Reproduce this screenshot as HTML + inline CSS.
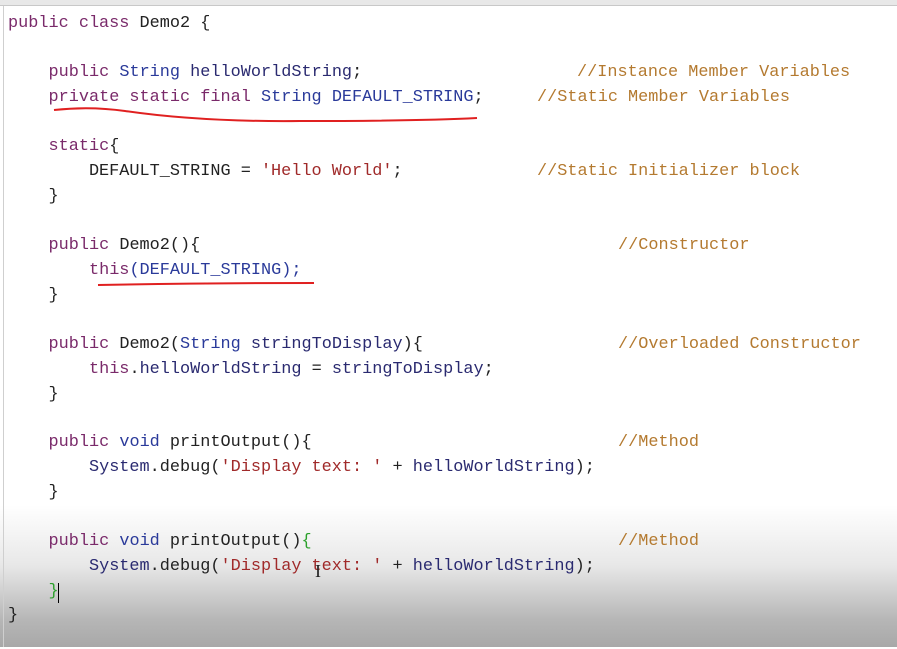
<!DOCTYPE html>
<html><head><style>
html,body{margin:0;padding:0}
body{width:897px;height:647px;overflow:hidden;position:relative;background:linear-gradient(to bottom,#fff 0px,#fff 505px,#e8e8e8 565px,#b6b6b6 620px,#a8a8a8 647px);font-family:"Liberation Mono",monospace;font-size:16.86px;color:#222}
.top{position:absolute;left:0;top:0;width:897px;height:5px;background:#e8e8e8;border-bottom:1px solid #c8c8c8}
.lb{position:absolute;left:3px;top:6px;width:1px;height:641px;background:#cfcfcf}
.w{position:absolute;left:0;top:2px;width:897px;height:647px}
.l{position:absolute;left:8px;white-space:pre;line-height:24.7px;height:24.7px}
.c{position:absolute;white-space:pre;line-height:24.7px;color:#b47a30}
.k{color:#7a2a6a}.t{color:#2a3a9a}.i{color:#2a2a70}.s{color:#a02a2a}.g{color:#2aa02a}
</style></head><body>
<div class="top"></div><div class="lb"></div>
<div class="w">
<div class="l" style="top:9.6px"><span class="k">public class</span> Demo2 {</div>
<div class="l" style="top:59px">    <span class="k">public</span> <span class="t">String</span> <span class="i">helloWorldString</span>;</div>
<div class="c" style="left:577px;top:59px">//Instance Member Variables</div>
<div class="l" style="top:84px">    <span class="k">private static final</span> <span class="t">String</span> <span class="t">DEFAULT_STRING</span>;</div>
<div class="c" style="left:537px;top:84px">//Static Member Variables</div>
<div class="l" style="top:133px">    <span class="k">static</span>{</div>
<div class="l" style="top:158px">        DEFAULT_STRING = <span class="s">'Hello World'</span>;</div>
<div class="c" style="left:537px;top:158px">//Static Initializer block</div>
<div class="l" style="top:183px">    }</div>
<div class="l" style="top:232px">    <span class="k">public</span> Demo2(){</div>
<div class="c" style="left:618px;top:232px">//Constructor</div>
<div class="l" style="top:257px">        <span class="k">this</span><span class="t">(DEFAULT_STRING);</span></div>
<div class="l" style="top:282px">    }</div>
<div class="l" style="top:331px">    <span class="k">public</span> Demo2(<span class="t">String</span> <span class="i">stringToDisplay</span>){</div>
<div class="c" style="left:618px;top:331px">//Overloaded Constructor</div>
<div class="l" style="top:356px">        <span class="k">this</span>.<span class="i">helloWorldString</span> = <span class="i">stringToDisplay</span>;</div>
<div class="l" style="top:381px">    }</div>
<div class="l" style="top:429px">    <span class="k">public</span> <span class="t">void</span> printOutput(){</div>
<div class="c" style="left:618px;top:429px">//Method</div>
<div class="l" style="top:454px">        <span class="i">System</span>.debug(<span class="s">'Display text: '</span> + <span class="i">helloWorldString</span>);</div>
<div class="l" style="top:479px">    }</div>
<div class="l" style="top:528px">    <span class="k">public</span> <span class="t">void</span> printOutput()<span class="g">{</span></div>
<div class="c" style="left:618px;top:528px">//Method</div>
<div class="l" style="top:553px">        <span class="i">System</span>.debug(<span class="s">'Display text: '</span> + <span class="i">helloWorldString</span>);</div>
<div class="l" style="top:578px">    <span class="g">}</span></div>
<div style="position:absolute;left:58px;top:581px;width:1px;height:20px;background:#000"></div>
<div class="l" style="top:602px">}</div>
<div style="position:absolute;left:315px;top:560px;font-family:'Liberation Serif',serif;font-size:18px;line-height:18px">I</div>
</div>
<svg width="897" height="647" style="position:absolute;left:0;top:0">
<path d="M54 110 Q90 106 125 111 Q200 122 300 121 Q420 121 477 118" stroke="#e02020" stroke-width="2" fill="none"/>
<path d="M98 285 Q200 283 314 283" stroke="#e02020" stroke-width="2" fill="none"/>
</svg>
</body></html>
